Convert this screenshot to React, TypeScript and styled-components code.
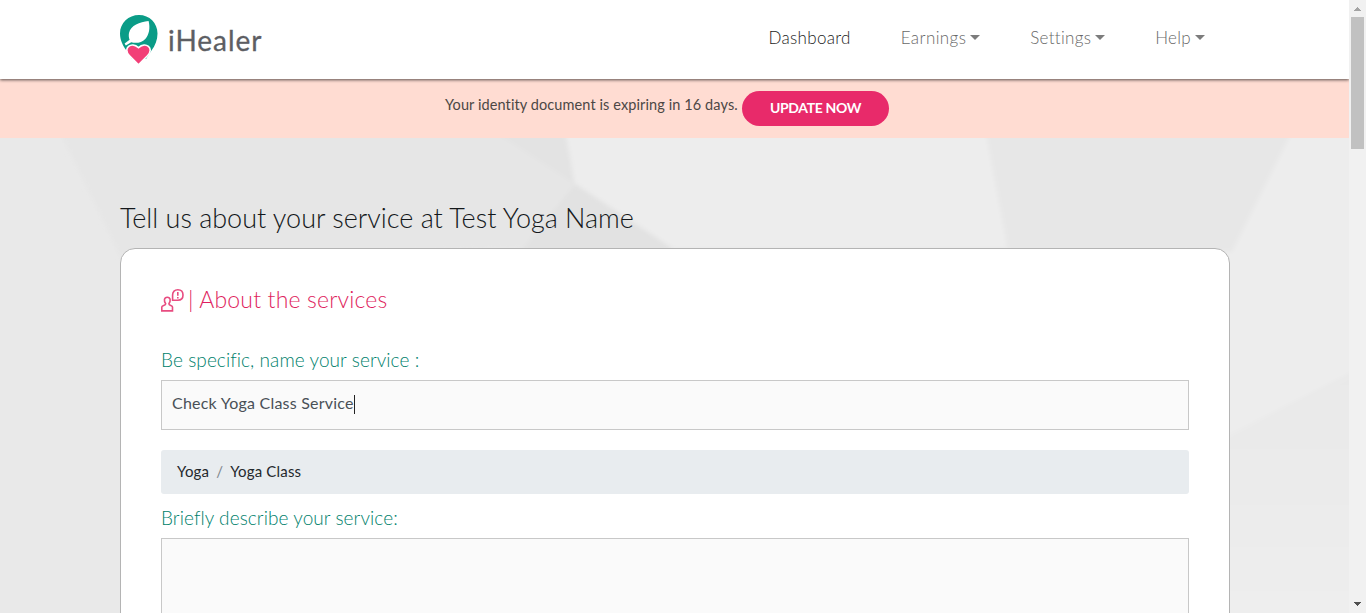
import React from "react";
import styled, { createGlobalStyle } from "styled-components";

const GlobalStyle = createGlobalStyle`
  * { box-sizing: border-box; }
  html, body { margin: 0; height: 100%; overflow: hidden; }
  body { font-family: Lato, "Open Sans", sans-serif; color: #212529; background: #e9e9e9; }
`;

const Shell = styled.div`
  display: grid;
  grid-template-columns: 1fr 17px;
  height: 613px;
  overflow: hidden;
`;

const Page = styled.div`
  display: flex;
  flex-direction: column;
  min-width: 0;
  height: 613px;
  overflow: hidden;
`;

const Header = styled.header`
  position: relative;
  z-index: 2;
  flex: none;
  display: flex;
  justify-content: space-between;
  height: 79px;
  padding: 0 144px 0 120px;
  background: #fff;
  box-shadow: 0 1px 3px rgba(0, 0, 0, 0.65);
`;

const Brand = styled.a`
  display: flex;
  align-items: flex-start;
  padding-top: 14px;
`;

const BrandName = styled.span`
  margin: 8px 0 0 10px;
  font: 400 28px/36px Lato, sans-serif;
  letter-spacing: 0.95px;
  color: #5d5e63;
  -webkit-text-stroke: 0.3px #5d5e63;
`;

const Nav = styled.nav`
  display: flex;
  gap: 50px;
  padding-top: 26px;
`;

const NavLink = styled.a<{ $active?: boolean; $spacing?: number }>`
  display: flex;
  font: 300 17px/24px Lato, sans-serif;
  letter-spacing: ${(p) => p.$spacing ?? 0.3}px;
  white-space: nowrap;
  color: ${(p) => (p.$active ? "#1c1c1c" : "#686868")};
`;

const Caret = styled.i`
  width: 0;
  height: 0;
  margin: 9px 0 0 4px;
  border: 5px solid transparent;
  border-top-color: #7c7c7c;
  border-bottom: 0;
`;

const Notice = styled.div`
  flex: none;
  display: flex;
  align-items: flex-start;
  height: 59px;
  padding: 12px 0 0 445px;
  background: #ffdcd2;
`;

const NoticeText = styled.span`
  width: 297px;
  padding-top: 4px;
  font: 400 14.5px/20px Lato, sans-serif;
  letter-spacing: 0.1px;
  white-space: nowrap;
  color: #4c4745;
`;

const PillButton = styled.button`
  width: 147px;
  height: 35px;
  padding: 0 0 2px;
  border: 0;
  border-radius: 18px;
  background: #e82a6a;
  color: #fff;
  font: 700 14px/33px Lato, sans-serif;
  letter-spacing: -0.35px;
`;

const Main = styled.main`
  position: relative;
  z-index: 0;
  flex: 1;
  display: flex;
  flex-direction: column;
  padding: 61px 119px 0 120px;
`;

const Backdrop = styled.svg`
  position: absolute;
  inset: 0;
  z-index: -1;
`;

const Title = styled.h1`
  margin: 0 0 11px;
  font: 300 27px/38px Lato, sans-serif;
  letter-spacing: -0.01px;
  white-space: nowrap;
  color: #14181b;
`;

const Card = styled.section`
  flex: none;
  height: 420px;
  padding: 34px 40px 0;
  border: 1px solid #b4b4b4;
  border-radius: 15px;
  background: #fff;
`;

const SectionTitle = styled.h2`
  display: flex;
  margin: 0 0 31px;
  color: #e01f60;
  font: 300 23px/32px Lato, sans-serif;
  letter-spacing: 0.17px;
  white-space: nowrap;
  svg { margin: 6px 4px 0 0; }
`;

const Label = styled.label`
  display: block;
  height: 34px;
  color: #007f6c;
  font: 300 19px/28px Lato, sans-serif;
  letter-spacing: 0.08px;
  white-space: nowrap;
`;

const Field = styled.div<{ $height: number }>`
  display: flex;
  height: ${(p) => p.$height}px;
  padding: 10px;
  border: 1px solid #c8c8c8;
  background: #fafafa;
  color: #495057;
  font: 400 16px/24px Lato, sans-serif;
  letter-spacing: 0.23px;
`;

const TextCursor = styled.i`
  width: 1px;
  height: 19px;
  margin-top: 4px;
  background: #222;
`;

const Breadcrumb = styled.div`
  display: flex;
  height: 44px;
  margin: 20px 0 10px;
  padding: 0 16px;
  border-radius: 3px;
  background: #e8ecef;
  color: #24282c;
  font: 400 15px/42px Lato, sans-serif;
  letter-spacing: 0.18px;
`;

const Slash = styled.span`
  margin: 0 7px;
  color: #7d858c;
`;

const Scrollbar = styled.div`
  display: flex;
  flex-direction: column;
  align-items: center;
  background: #f1f1f1;
`;

const Thumb = styled.div`
  width: 13px;
  height: 132px;
  margin-bottom: auto;
  background: #c1c1c1;
`;

const LogoMark = () => (
  <svg width="38" height="51" viewBox="0 0 38 51">
    <path d="M19 1C8.500 1 0 9 0 19.400c0 6.500 2.800 12 6.500 17.100L12 45h14l5.500-8.500c3.700-5.100 6-10.600 6-17.100C37.500 9 29.500 1 19 1z" fill="#0a9c87" />
    <path d="M28.600 7c-9 .8-17.800 4.500-19.600 12-.5 2.300-.2 4.700.6 6.700l-5 3.800 1.200 1.900 5.400-3.200c4.300 1 10.300 1 14.100-3.300 4-4.400 5-11 3.300-17.900z" fill="#fff" />
    <path d="M18.500 50.700 9.300 41.500c-7-7.200 2-14.300 9.200-7.800 7.200-6.500 16.200.6 9.200 7.800z" fill="#f23f77" stroke="#fff" strokeWidth="1.600" />
  </svg>
);

const AdviceIcon = () => (
  <svg width="23" height="23" viewBox="0 0 23 23" fill="none" stroke="#e84c80" strokeWidth="1.600">
    <path d="M.8 21.900v-4c0-1.800 3.900-1.200 3.900-3.200-2-2.600-1.800-6.500 1.600-6.500s3.600 3.900 1.600 6.500c0 2 3.600 1.400 3.600 3.200v4z" />
    <path d="M11.600 11.200V6c0-3.400 2.100-5.200 5.200-5.200S22 2.900 22 6s-2.100 5.200-5.200 5.200z" />
    <path d="M16.800 3v3.800M16.800 8v1.500" />
  </svg>
);

const Facets = () => (
  <Backdrop width="1349" height="475" viewBox="0 138 1349 475">
    <defs>
      <linearGradient id="lower" x1="0" y1="0" x2="0" y2="1">
        <stop offset="0" stopColor="#e9e9e9" />
        <stop offset="0.5" stopColor="#ebebeb" />
        <stop offset="1" stopColor="#eeeeee" />
      </linearGradient>
      <filter id="soften" x="-5%" y="-5%" width="110%" height="110%">
        <feGaussianBlur stdDeviation="2" />
      </filter>
    </defs>
    <path d="M0 138h1349v475H0z" fill="#e9e9e9" />
    <g filter="url(#soften)">
      <path d="M56 124h509l10 61-52 63-400 14z" fill="#e6e6e6" />
      <path d="M482 124h82l10 60z" fill="#e3e3e3" />
      <path d="M564 124h800v500h-165V248H671l-96-65z" fill="#ededed" />
      <path d="m575 184 97 64v10H515z" fill="#e2e2e2" />
      <path d="M984 124h312l-64 128-223 4z" fill="#e7e7e7" />
      <path d="m1215 442 150-77v255h-150z" fill="url(#lower)" />
    </g>
  </Backdrop>
);

const ScrollArrow = ({ up }: { up?: boolean }) => (
  <svg width="17" height="17" viewBox="0 0 17 17" shapeRendering="crispEdges">
    {up ? (
      <path d="M8 7h1v1h1v1h1v1h1v1H5v-1h1V9h1V8h1z" fill="#a3a3a3" />
    ) : (
      <path d="M5 6h7v1h-1v1h-1v1H9v1H8V9H7V8H6V7H5z" fill="#505050" />
    )}
  </svg>
);

export default function App() {
  return (
    <>
      <GlobalStyle />
      <Shell>
        <Page>
          <Header>
            <Brand>
              <LogoMark />
              <BrandName>iHealer</BrandName>
            </Brand>
            <Nav>
              <NavLink $active>Dashboard</NavLink>
              <NavLink $spacing={0.4}>Earnings<Caret /></NavLink>
              <NavLink>Settings<Caret /></NavLink>
              <NavLink>Help<Caret /></NavLink>
            </Nav>
          </Header>
          <Notice>
            <NoticeText>Your identity document is expiring in 16 days.</NoticeText>
            <PillButton>UPDATE NOW</PillButton>
          </Notice>
          <Main>
            <Facets />
            <Title>Tell us about your service at Test Yoga Name</Title>
            <Card>
              <SectionTitle><AdviceIcon />| About the services</SectionTitle>
              <Label>Be specific, name your service :</Label>
              <Field $height={50}>Check Yoga Class Service<TextCursor /></Field>
              <Breadcrumb>Yoga<Slash>/</Slash>Yoga Class</Breadcrumb>
              <Label>Briefly describe your service:</Label>
              <Field $height={120} />
            </Card>
          </Main>
        </Page>
        <Scrollbar>
          <ScrollArrow up />
          <Thumb />
          <ScrollArrow />
        </Scrollbar>
      </Shell>
    </>
  );
}
